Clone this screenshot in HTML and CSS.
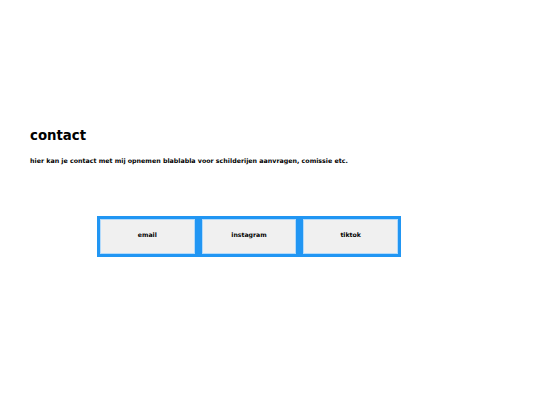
FILE: index.html
```html
<!DOCTYPE html>
<html lang="nl">
<head>
    <meta charset="UTF-8">
    <meta name="viewport" content="width=device-width, initial-scale=1.0">
    <title>contact</title>
    <link rel="stylesheet" href="styles.css">
</head>
<body>
    <div class="contact">
        <h1>contact</h1>
        <p>hier kan je contact met mij opnemen blablabla voor schilderijen aanvragen, comissie etc.</p>
        <div class="grid-container">
            <div class="grid-item">email</div>
            <div class="grid-item">instagram</div>
            <div class="grid-item">tiktok</div>
        </div>
    </div>
</body>
</html>
```

FILE: styles.css
```css
body {
    font-family: "DejaVu Sans", Verdana, sans-serif;
    font-weight: bold;
    margin: 0;
    background: #fff;
    color: #000;
}
.contact {
    padding: 126px 30px 0 30px;
}
.contact h1 {
    font-size: 13.3px;
    margin: 0 0 10px 0;
    line-height: 20px;
}
.contact p {
    font-size: 6.3px;
    margin: 0;
    line-height: 9px;
}
.grid-container {
    display: grid;
    grid-template-columns: 1fr 1fr 1fr;
    gap: 7px;
    width: 298px;
    margin: 51px 0 0 67px;
    padding: 3px;
    background-color: #2196F3;
}
.grid-item {
    background-color: #f0f0f0;
    border: 1px solid #b3dafb;
    box-sizing: border-box;
    height: 35px;
    padding-bottom: 5px;
    display: flex;
    align-items: center;
    justify-content: center;
    font-size: 6.2px;
}
```
